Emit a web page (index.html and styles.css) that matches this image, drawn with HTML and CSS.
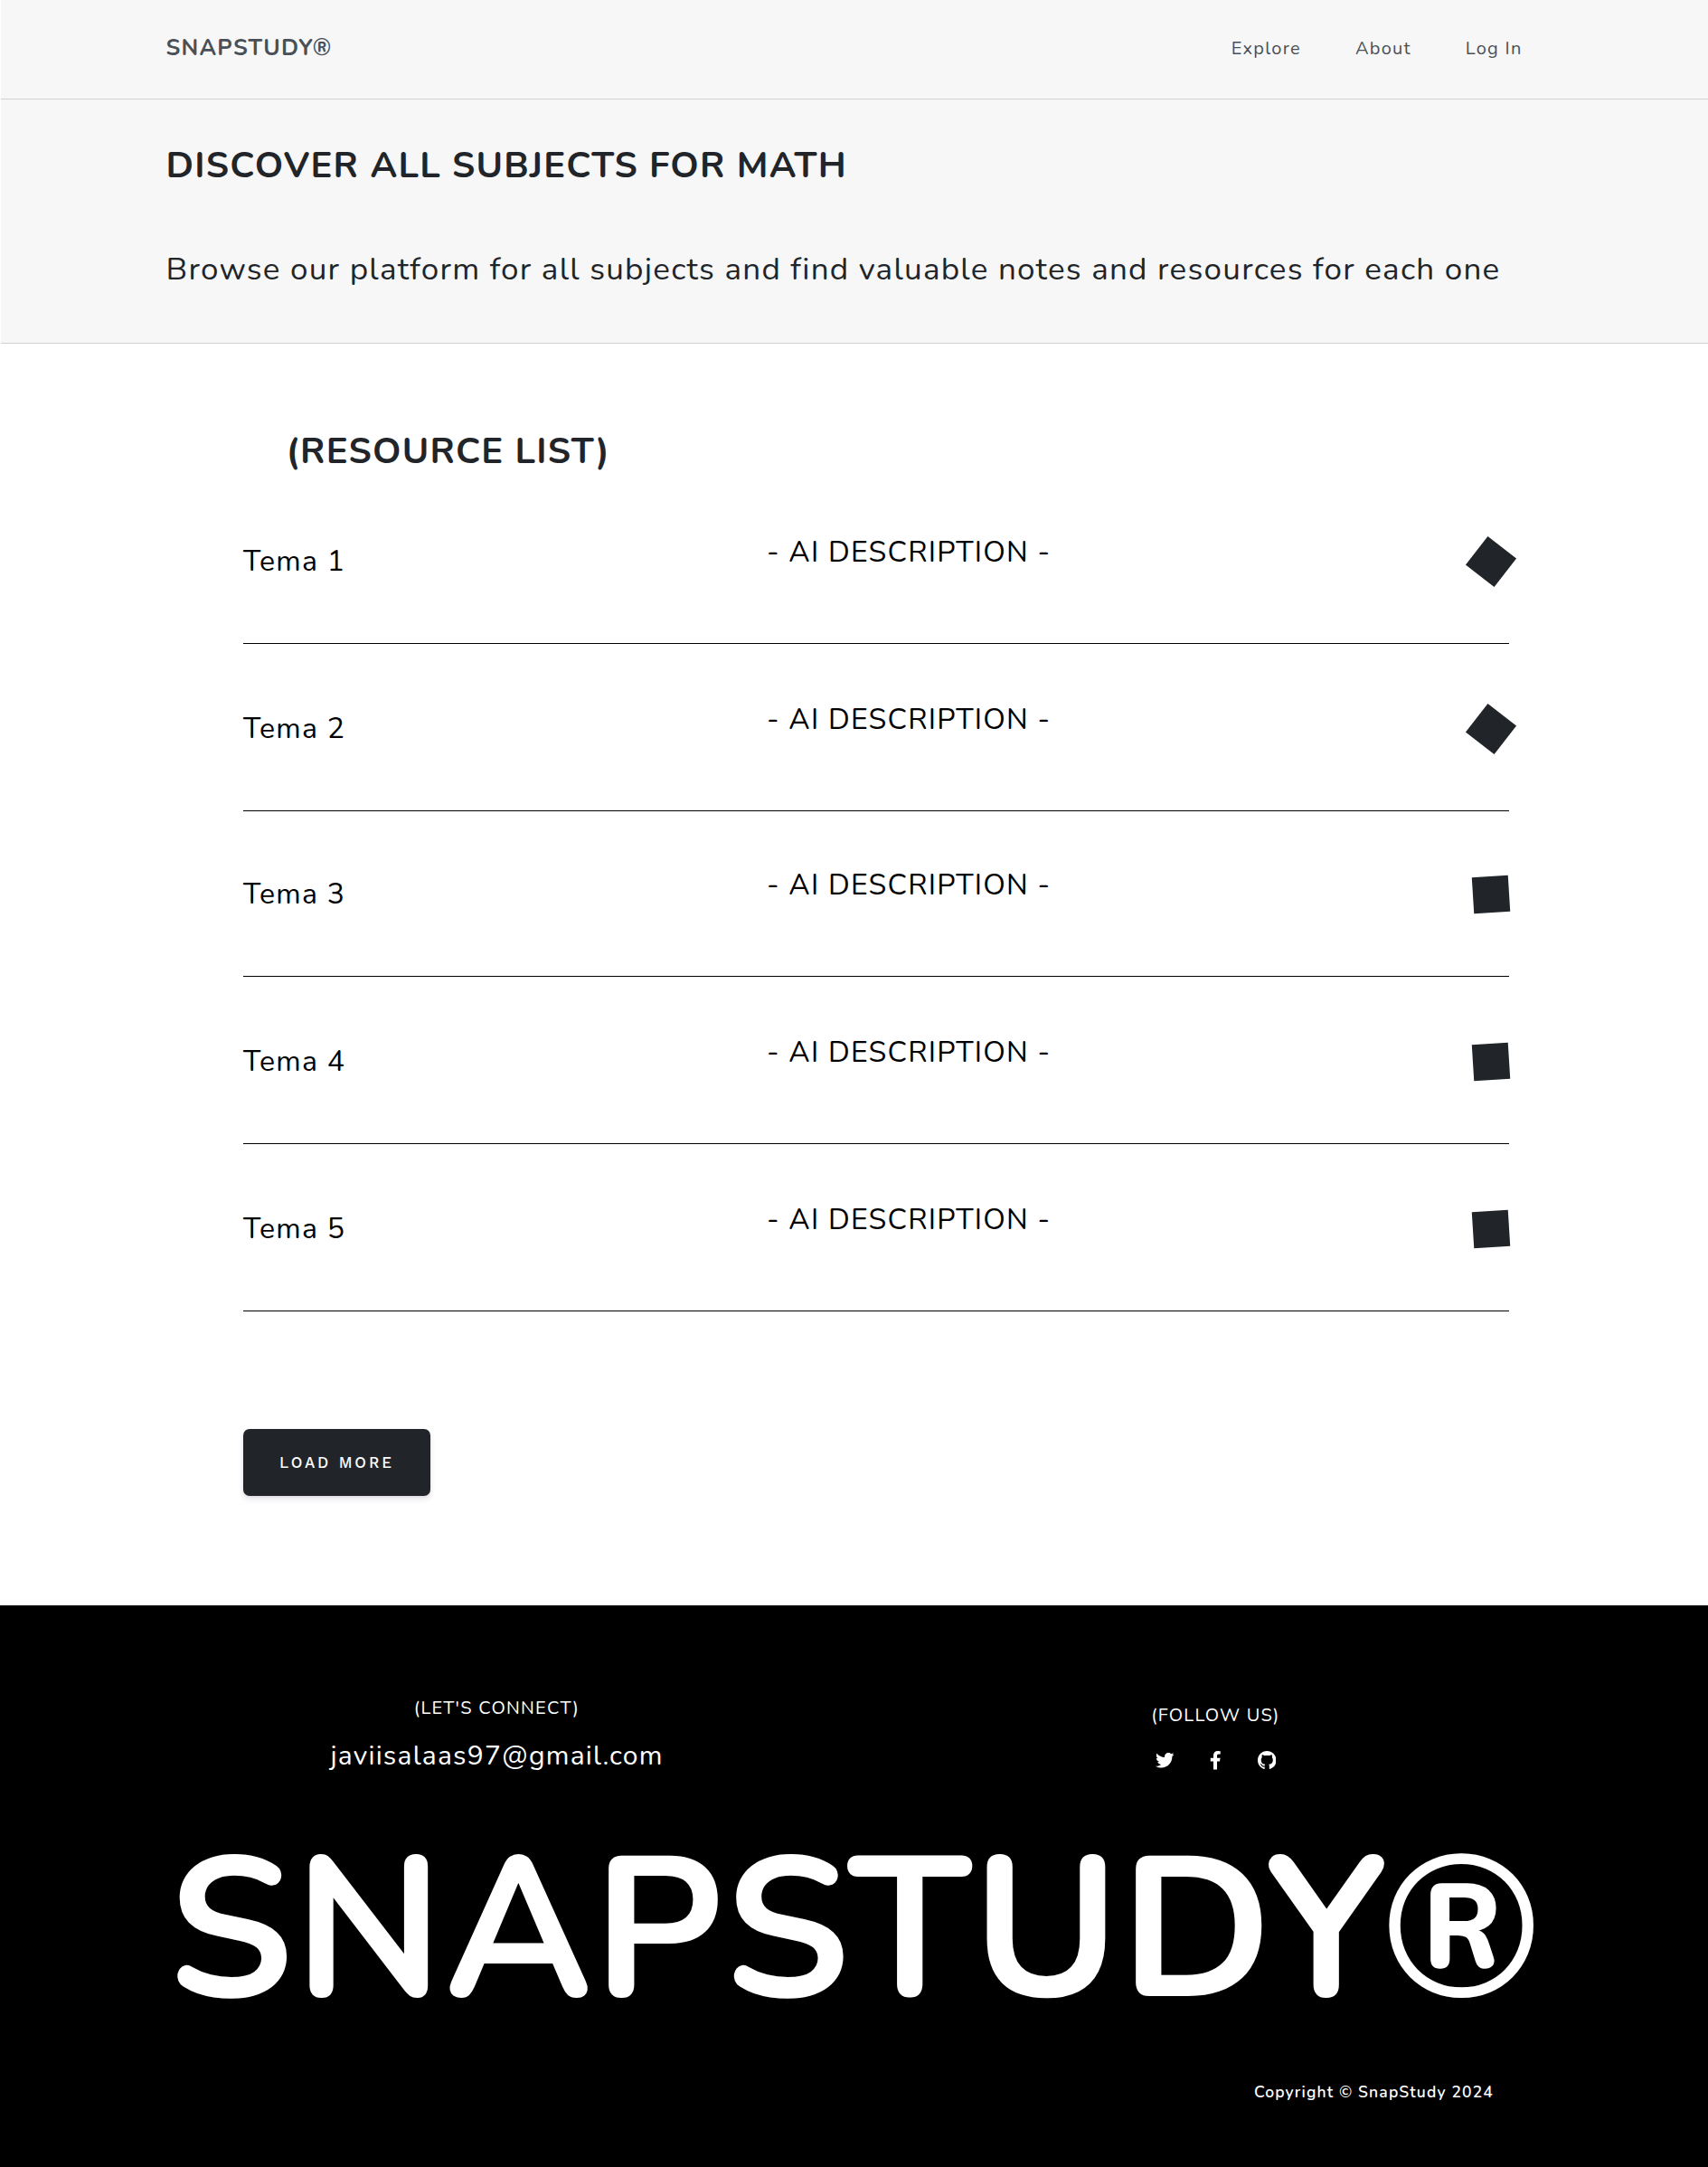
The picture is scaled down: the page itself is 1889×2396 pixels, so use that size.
FILE: index.html
```html
<!DOCTYPE html>
<html lang="en">
<head>
<meta charset="utf-8">
<title>SnapStudy</title>
<link rel="stylesheet" href="styles.css">
</head>
<body>
<header class="navbar">
  <a class="brand">SNAPSTUDY®</a>
  <nav class="nav">
    <a>Explore</a>
    <a>About</a>
    <a>Log In</a>
  </nav>
</header>
<section class="hero">
  <h1 class="hero-title">DISCOVER ALL SUBJECTS FOR MATH</h1>
  <p class="hero-text">Browse our platform for all subjects and find valuable notes and resources for each one</p>
</section>
<main class="resources">
  <h2 class="list-title">(RESOURCE LIST)</h2>
  <ul class="list">
    <li class="row"><span class="topic">Tema 1</span><span class="desc">- AI DESCRIPTION -</span><i class="mark mark-turned"></i></li>
    <li class="row"><span class="topic">Tema 2</span><span class="desc">- AI DESCRIPTION -</span><i class="mark mark-turned"></i></li>
    <li class="row row-tight"><span class="topic">Tema 3</span><span class="desc">- AI DESCRIPTION -</span><i class="mark"></i></li>
    <li class="row"><span class="topic">Tema 4</span><span class="desc">- AI DESCRIPTION -</span><i class="mark"></i></li>
    <li class="row"><span class="topic">Tema 5</span><span class="desc">- AI DESCRIPTION -</span><i class="mark"></i></li>
  </ul>
  <button class="load-more">LOAD MORE</button>
</main>
<footer class="footer">
  <div class="contact">
    <div class="col">
      <h3 class="label">(LET'S CONNECT)</h3>
      <a class="email">javiisalaas97@gmail.com</a>
    </div>
    <div class="col col-follow">
      <h3 class="label">(FOLLOW US)</h3>
      <div class="social">
        <svg class="icon" viewBox="0 0 512 512"><path d="M459.37 151.716c.325 4.548.325 9.097.325 13.645 0 138.72-105.583 298.558-298.558 298.558-59.452 0-114.68-17.219-161.137-47.106 8.447.974 16.568 1.299 25.34 1.299 49.055 0 94.213-16.568 130.274-44.832-46.132-.975-84.792-31.188-98.112-72.772 6.498.974 12.995 1.624 19.818 1.624 9.421 0 18.843-1.3 27.614-3.573-48.081-9.747-84.143-51.98-84.143-102.985v-1.299c13.969 7.797 30.214 12.67 47.431 13.319-28.264-18.843-46.781-51.005-46.781-87.391 0-19.492 5.197-37.36 14.294-52.954 51.655 63.675 129.3 105.258 216.365 109.807-1.624-7.797-2.599-15.918-2.599-24.04 0-57.828 46.782-104.934 104.934-104.934 30.213 0 57.502 12.67 76.67 33.137 23.715-4.548 46.456-13.32 66.599-25.34-7.798 24.366-24.366 44.833-46.132 57.827 21.117-2.273 41.584-8.122 60.426-16.243-14.292 20.791-32.161 39.308-52.628 54.253z"/></svg>
        <svg class="icon" viewBox="-96 0 512 512"><path d="M279.14 288l14.22-92.66h-88.91v-60.13c0-25.35 12.42-50.06 52.24-50.06h40.42V6.26S260.43 0 225.36 0c-73.22 0-121.08 44.38-121.08 124.72v70.62H22.89V288h81.39v224h100.17V288z"/></svg>
        <svg class="icon" viewBox="0 0 16 16"><path d="M8 0C3.58 0 0 3.58 0 8c0 3.54 2.29 6.53 5.47 7.59.4.07.55-.17.55-.38 0-.19-.01-.82-.01-1.49-2.01.37-2.53-.49-2.69-.94-.09-.23-.48-.94-.82-1.13-.28-.15-.68-.52-.01-.53.63-.01 1.08.58 1.23.82.72 1.21 1.87.87 2.33.66.07-.52.28-.87.51-1.07-1.78-.2-3.64-.89-3.64-3.95 0-.87.31-1.59.82-2.15-.08-.2-.36-1.02.08-2.12 0 0 .67-.21 2.2.82.64-.18 1.32-.27 2-.27s1.36.09 2 .27c1.53-1.04 2.2-.82 2.2-.82.44 1.1.16 1.92.08 2.12.51.56.82 1.27.82 2.15 0 3.07-1.87 3.75-3.65 3.95.29.25.54.73.54 1.48 0 1.07-.01 1.93-.01 2.2 0 .21.15.46.55.38A8.01 8.01 0 0 0 16 8c0-4.42-3.58-8-8-8z"/></svg>
      </div>
    </div>
  </div>
  <p class="wordmark">SNAPSTUDY®</p>
  <p class="copyright">Copyright © SnapStudy 2024</p>
</footer>
</body>
</html>
```
FILE: styles.css
```css
* { box-sizing: border-box; margin: 0; padding: 0; }
body {
  background: #fff;
  color: #212529;
  font-family: Nunito, Lato, sans-serif;
  letter-spacing: 1.25px;
}
.navbar {
  display: flex;
  justify-content: space-between;
  height: 110px;
  margin-left: 1px;
  padding: 37.5px 205.5px 0 182.5px;
  background: #f7f7f7;
  border-bottom: 1px solid #ced2d2;
  color: #495057;
}
.brand { font-size: 25px; line-height: 30px; font-weight: 700; }
.nav { display: flex; gap: 60px; padding-top: 4px; font-size: 20px; line-height: 24px; }
.hero {
  height: 270px;
  margin-left: 1px;
  padding: 49px 0 0 182.5px;
  background: #f7f7f7;
  border-bottom: 1px solid #ced2d2;
}
.hero-title { font-size: 40px; line-height: 48px; font-weight: 700; }
.hero-text { margin-top: 69.5px; font-size: 35px; line-height: 42px; white-space: nowrap; }
.resources { height: 1395px; padding: 95px 220px 0 269px; }
.list-title { padding-left: 47.5px; font-size: 40px; line-height: 48px; font-weight: 700; }
.list { list-style: none; padding-top: 4px; color: #000; }
.row {
  display: grid;
  grid-template-columns: 579px 1fr 40px;
  align-items: center;
  height: 185px;
  padding-top: 3px;
  border-bottom: 1px solid #000;
  font-size: 32px;
  line-height: 38px;
}
.row-tight { height: 183px; padding-top: 1px; }
.desc { padding-bottom: 20px; }
.mark { width: 40px; height: 40px; background: #212529; transform: rotate(-3.6deg); }
.mark-turned { transform: rotate(37.8deg); }
.load-more {
  display: block;
  width: 207px;
  height: 74px;
  margin-top: 130px;
  padding-bottom: 1px;
  border: 0;
  border-radius: 7px;
  background: #212529;
  box-shadow: 0 4px 6px rgba(50, 50, 93, .11), 0 1px 3px rgba(0, 0, 0, .08);
  color: #fff;
  font: 500 17px/20px "Work Sans", Inter, sans-serif;
  letter-spacing: 2.9px;
}
.footer { height: 621px; padding-top: 101.5px; background: #000; color: #fff; }
.contact { display: grid; grid-template-columns: 795px 795px; height: 168px; padding-left: 152px; }
.col { display: flex; flex-direction: column; align-items: center; }
.col-follow { padding-top: 8px; }
.label { font-size: 20px; line-height: 24px; font-weight: 400; }
.email { margin-top: 23.5px; font-size: 30px; line-height: 36px; }
.social { display: flex; gap: 36px; margin-top: 27.5px; }
.icon { display: block; width: 20.5px; height: 20.5px; fill: #fff; }
.wordmark { padding-left: 185.5px; font-size: 220px; line-height: 180px; font-weight: 700; white-space: nowrap; }
.copyright {
  margin-top: 77px;
  padding-right: 237px;
  text-align: right;
  font-size: 17.5px;
  line-height: 22px;
  font-weight: 600;
  letter-spacing: 1.14px;
}
```
